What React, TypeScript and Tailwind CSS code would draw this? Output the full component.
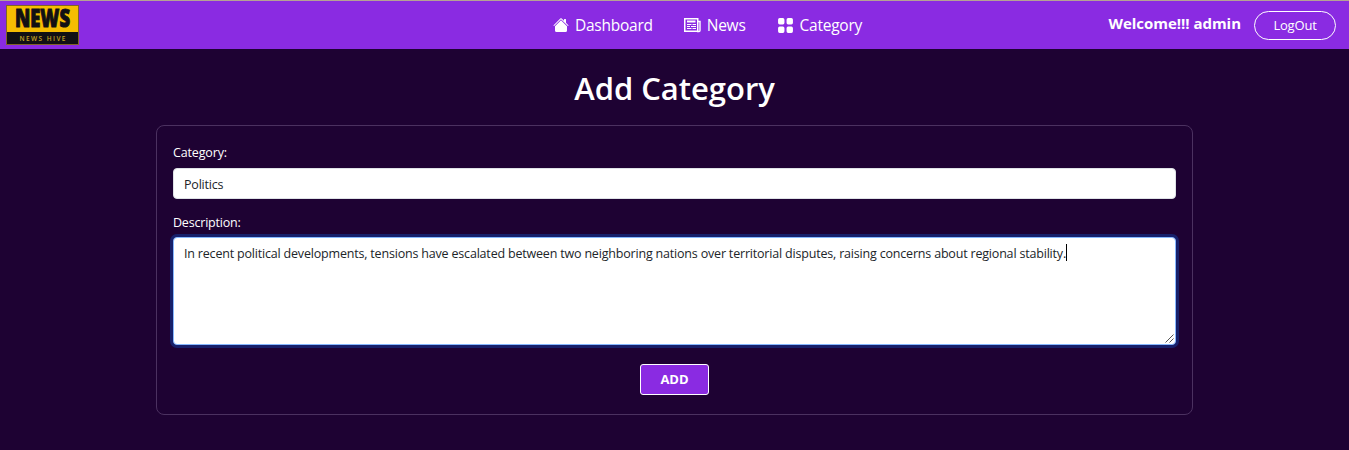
import React from "react";
import { BsGridFill, BsHouseFill } from "react-icons/bs";

function Logo() {
  return (
    <svg width="74" height="41" viewBox="0 0 74 41" className="block overflow-visible" role="img" aria-label="News Hive">
      <rect x="0.5" y="0.5" width="72" height="39" fill="#f5bd02" stroke="#806329" />
      <rect x="1" y="27" width="71" height="12" fill="#111014" />
      <text x="9" y="22" fontFamily="Open Sans, sans-serif" fontWeight="800" fontSize="24" textLength="55" lengthAdjust="spacingAndGlyphs" fill="#111014" stroke="#111014" strokeWidth="1">NEWS</text>
      <text x="13.5" y="35.5" fontFamily="Open Sans, sans-serif" fontWeight="600" fontSize="6.5" textLength="46" fill="#c7a426">NEWS HIVE</text>
    </svg>
  );
}

function NewsIcon() {
  return (
    <svg width="17" height="15" viewBox="0 0 17 15" fill="none" stroke="currentColor" className="block">
      <rect x="0.75" y="0.75" width="13" height="12.5" strokeWidth="1.5" />
      <path d="M14 3.5h2v9q0 1-1 1h-2" strokeWidth="1.4" />
      <path d="M3 3.5h8.5" strokeWidth="2" />
      <path d="M3 6.5h4.5M8.5 6.5h3.5M3 8.5h3M7 8.5h5M3 10.5h4.5M8.5 10.5h3.5" strokeWidth="1.2" />
    </svg>
  );
}

function NavItem({ icon, label }: { icon: React.ReactNode; label: string }) {
  return (
    <a className="flex items-center gap-1.5 text-white">
      {icon}
      <span className="text-[15.5px] leading-6 tracking-[-0.25px]">{label}</span>
    </a>
  );
}

export default function App() {
  return (
    <div className="h-[450px] overflow-hidden bg-[#1e0233] font-['Open_Sans',sans-serif] text-white">
      <header className="flex h-[49px] items-center border-t border-[#b5a394] bg-[#8a2be2]">
        <div className="w-[553px] pl-1.5">
          <Logo />
        </div>
        <nav className="flex gap-[31px]">
          <NavItem icon={<BsHouseFill size={16} />} label="Dashboard" />
          <NavItem icon={<NewsIcon />} label="News" />
          <NavItem icon={<BsGridFill size={17} />} label="Category" />
        </nav>
        <div className="ml-auto flex items-center gap-[13px] pr-[13px]">
          <span className="pb-1 text-[15px] leading-5 font-bold tracking-[-0.03px]">Welcome!!! admin</span>
          <button className="h-[29px] w-[82px] rounded-full border border-white text-[13px] leading-none tracking-[-0.2px]">LogOut</button>
        </div>
      </header>
      <main className="mx-auto w-[1037px] pt-5">
        <h1 className="h-[38px] text-center text-[31px] leading-[38px] font-semibold tracking-[-0.03px]">Add Category</h1>
        <form className="mt-[18px] h-[290px] rounded-lg border border-[#4b3160] px-4 pt-4">
          <label className="block h-[21px] text-[12.5px] leading-[21px] font-medium">
            <span className="tracking-[-0.15px]">Category:</span>
          </label>
          <input
            defaultValue="Politics"
            className="mt-[5px] block h-[31px] w-full rounded border border-[#dee2e6] bg-white px-[10px] pt-0.5 text-[12.5px] tracking-[-0.2px] text-[#212529]"
          />
          <label className="mt-[13px] block h-[21px] text-[12.5px] leading-[21px] font-medium">
            <span className="tracking-[-0.2px]">Description:</span>
          </label>
          <div className="relative mt-[4px] h-[108px] rounded border border-[#86b7fe] bg-white px-[10px] py-[5px] text-[12.5px] leading-[21px] text-[#212529] shadow-[0_0_0_3px_#17206b]">
            <span className="tracking-[-0.188px] whitespace-nowrap">
              In recent political developments, tensions have escalated between two neighboring nations over territorial disputes, raising concerns about regional stability.
            </span>
            <span className="absolute top-[6px] left-[892px] h-[17px] w-px bg-black" />
            <svg className="absolute right-[1px] bottom-[1px]" width="9" height="9" viewBox="0 0 9 9" stroke="#555" strokeWidth="1">
              <path d="M.5 8.5l8-8M4.5 8.5l4-4" />
            </svg>
          </div>
          <button type="button" className="mx-auto mt-[19px] block h-[31px] w-[69px] rounded-[3px] border border-white bg-[#8a2be2] text-[13px] leading-none font-bold">
            ADD
          </button>
        </form>
      </main>
    </div>
  );
}
